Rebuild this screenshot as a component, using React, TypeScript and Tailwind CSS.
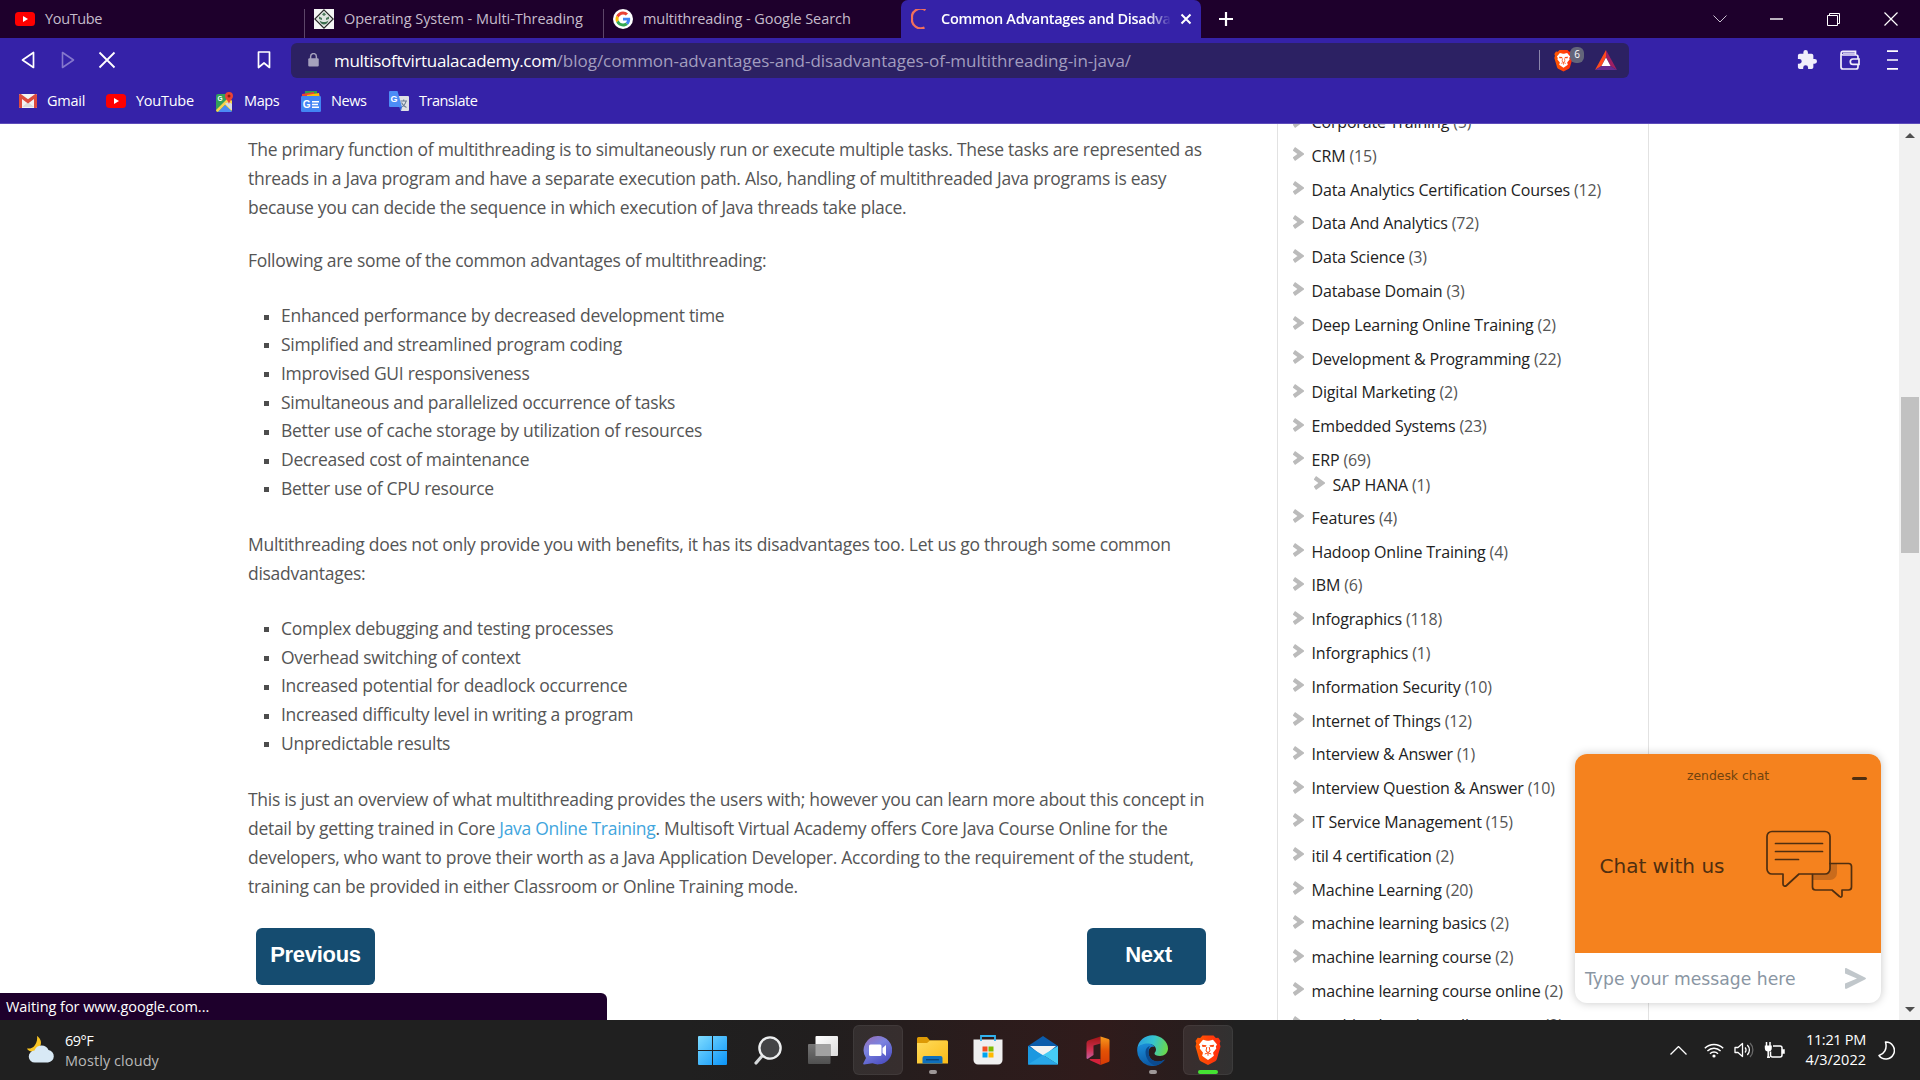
import type { ReactNode } from "react";

const advantages = [
  "Enhanced performance by decreased development time",
  "Simplified and streamlined program coding",
  "Improvised GUI responsiveness",
  "Simultaneous and parallelized occurrence of tasks",
  "Better use of cache storage by utilization of resources",
  "Decreased cost of maintenance",
  "Better use of CPU resource",
];

const disadvantages = [
  "Complex debugging and testing processes",
  "Overhead switching of context",
  "Increased potential for deadlock occurrence",
  "Increased difficulty level in writing a program",
  "Unpredictable results",
];

type Category = { name: string; count: number; child?: { name: string; count: number } };

const categories: Category[] = [
  { name: "Corporate Training", count: 5 },
  { name: "CRM", count: 15 },
  { name: "Data Analytics Certification Courses", count: 12 },
  { name: "Data And Analytics", count: 72 },
  { name: "Data Science", count: 3 },
  { name: "Database Domain", count: 3 },
  { name: "Deep Learning Online Training", count: 2 },
  { name: "Development & Programming", count: 22 },
  { name: "Digital Marketing", count: 2 },
  { name: "Embedded Systems", count: 23 },
  { name: "ERP", count: 69, child: { name: "SAP HANA", count: 1 } },
  { name: "Features", count: 4 },
  { name: "Hadoop Online Training", count: 4 },
  { name: "IBM", count: 6 },
  { name: "Infographics", count: 118 },
  { name: "Inforgraphics", count: 1 },
  { name: "Information Security", count: 10 },
  { name: "Internet of Things", count: 12 },
  { name: "Interview & Answer", count: 1 },
  { name: "Interview Question & Answer", count: 10 },
  { name: "IT Service Management", count: 15 },
  { name: "itil 4 certification", count: 2 },
  { name: "Machine Learning", count: 20 },
  { name: "machine learning basics", count: 2 },
  { name: "machine learning course", count: 2 },
  { name: "machine learning course online", count: 2 },
  { name: "machine learning online course", count: 2 },
];

function YouTubeIcon() {
  return (
    <svg width="20" height="14" viewBox="0 0 20 14">
      <rect width="20" height="14" rx="3.5" fill="#f00" />
      <path d="M8 4l5 3-5 3z" fill="#fff" />
    </svg>
  );
}

function GoogleIcon() {
  return (
    <svg width="20" height="20" viewBox="0 0 48 48">
      <circle cx="24" cy="24" r="24" fill="#fff" />
      <g transform="translate(6 6) scale(.75)">
        <path fill="#EA4335" d="M24 9.5c3.54 0 6.71 1.22 9.21 3.6l6.85-6.85C35.9 2.38 30.47 0 24 0 14.62 0 6.51 5.38 2.56 13.22l7.98 6.19C12.43 13.72 17.74 9.5 24 9.5z" />
        <path fill="#4285F4" d="M46.98 24.55c0-1.57-.15-3.09-.38-4.55H24v9.02h12.94c-.58 2.96-2.26 5.48-4.78 7.18l7.73 6c4.51-4.18 7.09-10.36 7.09-17.65z" />
        <path fill="#FBBC05" d="M10.53 28.59A14.5 14.5 0 0 1 9.77 24c0-1.6.27-3.14.76-4.59l-7.98-6.19A23.9 23.9 0 0 0 0 24c0 3.88.92 7.54 2.56 10.78l7.97-6.19z" />
        <path fill="#34A853" d="M24 48c6.48 0 11.93-2.13 15.89-5.81l-7.73-6c-2.15 1.45-4.92 2.3-8.16 2.3-6.26 0-11.57-4.22-13.47-9.91l-7.98 6.19C6.51 42.62 14.62 48 24 48z" />
      </g>
    </svg>
  );
}

function TutorialIcon() {
  return (
    <svg width="20" height="20" viewBox="0 0 20 20">
      <rect width="20" height="20" fill="#f4f5f4" />
      <path d="M10 .8L19.2 10 10 19.2.8 10z" fill="#dfe5e0" stroke="#222" strokeWidth="1.1" />
      <path d="M10 3.500l2 2-2 1.500-2-1.500zM5 7.500l3 1.500v2l-3-1zM15 7.500L12 9v2l3-1z" fill="#4c7a5b" />
      <path d="M5.500 11.500c1 3 3 4 4.500 4s3.500-1 4.500-4c-1.500 1.300-3 1.500-4.500 1.500s-3-.2-4.500-1.500z" fill="#3d6e4e" />
    </svg>
  );
}

function GmailIcon() {
  return (
    <svg width="18" height="14" viewBox="0 0 18 14">
      <rect width="18" height="14" rx="1.200" fill="#f3f3f3" />
      <path d="M3 13l6-5 6 5" fill="#dcdcdc" />
      <path d="M0 1.500V13a1 1 0 0 0 1 1h2V5l6 4.500L15 5v9h2a1 1 0 0 0 1-1V1.500C18 .2 16.500-.3 15.500.5L9 5.300 2.500.5C1.500-.3 0 .2 0 1.500z" fill="#dd4b3e" />
    </svg>
  );
}

function MapsIcon() {
  return (
    <svg width="19" height="21" viewBox="0 0 19 21">
      <path d="M1 5a2 2 0 0 1 2-2h8l6 7v9a2 2 0 0 1-2 2H3a2 2 0 0 1-2-2z" fill="#34a05a" />
      <path d="M1 19L14 6l3 4v9l-1 1-6-6-7 7c-1 0-2-1-2-2z" fill="#f8d24b" />
      <path d="M3 21l7-7 7 6.500-1 .5z" fill="#4c8bf5" />
      <path d="M10 12.500l7 7V13l-3-2z" fill="#d7dde2" />
      <text x="2.500" y="9.500" fontSize="6.500" fontWeight="700" fill="#fff" fontFamily="Liberation Sans, sans-serif">G</text>
      <path d="M14 1a4 4 0 0 1 4 4c0 3-3 4-4 8-1-4-4-5-4-8a4 4 0 0 1 4-4z" fill="#ea4335" />
      <circle cx="14" cy="5" r="1.500" fill="#8c1c13" />
    </svg>
  );
}

function NewsIcon() {
  return (
    <svg width="20" height="21" viewBox="0 0 20 21">
      <path d="M4 0h12v6H4z" fill="#2e9e4f" />
      <path d="M1 3l12-2 1 6H1z" fill="#ea4335" />
      <path d="M6 4l12-2 1 5H6z" fill="#fbbc05" />
      <rect y="5" width="20" height="16" rx="1.200" fill="#4285f4" />
      <text x="1.800" y="16.800" fontSize="10" fontWeight="700" fill="#fff" fontFamily="Liberation Sans, sans-serif">G</text>
      <path d="M11 10h7v1.500h-7zM11 12.700h6v1.500h-6zM11 15.400h7v1.500h-7z" fill="#fff" />
    </svg>
  );
}

function TranslateIcon() {
  return (
    <svg width="20" height="20" viewBox="0 0 20 20">
      <path d="M8 5h11a1 1 0 0 1 1 1v13a1 1 0 0 1-1 1h-7z" fill="#dfe1e4" />
      <path d="M11.500 10h6.500M14.700 8.500V10M17 10c-.5 3-2.500 5-4.500 6M12.500 11.500c1 2.500 2.500 4 5 5" stroke="#6b7f95" strokeWidth="1.100" fill="none" />
      <path d="M1 0h7.500l4.500 16H1a1 1 0 0 1-1-1V1a1 1 0 0 1 1-1z" fill="#4c8df6" />
      <path d="M10 16h3l-1 4z" fill="#3367d6" />
      <text x="1.600" y="11" fontSize="9" fontWeight="700" fill="#fff" fontFamily="Liberation Sans, sans-serif">G</text>
    </svg>
  );
}

function BraveLion({ width, height }: { width: number; height: number }) {
  return (
    <svg width={width} height={height} viewBox="0 0 26 30">
      <defs>
        <linearGradient id="lion" x1="0" x2="1">
          <stop offset="0" stopColor="#ff5a00" />
          <stop offset="1" stopColor="#ff2a10" />
        </linearGradient>
      </defs>
      <path d="M7.500.5h11l2.300 2.600 2.500-.3L25.500 6l-.8 2.500.8 3-3.600 12.500a4 4 0 0 1-1.600 2.200L13 30l-7.300-3.800A4 4 0 0 1 4.100 24L.5 11.500l.8-3L.5 6l2.200-3.200 2.500.3z" fill="url(#lion)" />
      <path d="M8 4.800l3 .7c1.300.4 2.700.4 4 0l3-.7 4 4.700-1.200 2 .5 2-3.300 4.300.9 3-1.900 1.500L13 25l-4-2.700-1.900-1.500.9-3-3.300-4.300.5-2L4 9.500z" fill="#fff" />
      <path d="M6.800 9.800l4.700.5-.6 1.500-3.400.2zM19.200 9.800l-4.700.5.6 1.500 3.400.2z" fill="#fc4a10" />
      <path d="M11.800 12l-.8 4 2 1.500 2-1.500-.8-4M9.800 19l3.200-1.300 3.200 1.300M13 17.700v3" fill="none" stroke="#fc4a10" />
    </svg>
  );
}

function Tab({ icon, title, className }: { icon: ReactNode; title: string; className: string }) {
  return (
    <div className={`flex h-full items-center gap-2.5 text-[14.5px] text-[#c5bccb] ${className}`}>
      {icon}
      <span className="whitespace-nowrap">{title}</span>
    </div>
  );
}

function TabStrip() {
  return (
    <div className="flex h-[38px] shrink-0 items-stretch bg-[#1e002c]">
      <Tab icon={<YouTubeIcon />} title="YouTube" className="w-[304px] pl-[15px] tracking-[-0.35px]" />
      <div className="mt-[9px] w-px bg-[#5c4568]" />
      <Tab icon={<TutorialIcon />} title="Operating System - Multi-Threading" className="w-[298px] pl-[9px] tracking-[-0.04px]" />
      <div className="mt-[9px] w-px bg-[#5c4568]" />
      <Tab icon={<GoogleIcon />} title="multithreading - Google Search" className="w-[297px] pl-[9px] tracking-[-0.07px]" />
      <div className="flex w-[300px] items-center rounded-t-[7px] bg-[#3522a8] pl-[10px] text-white">
        <svg width="20" height="20" viewBox="0 0 20 20" fill="none">
          <path d="M14.500 1A8.800 8.800 0 0 0 1 9.500 8.800 8.800 0 0 0 13.500 18.500" stroke="#f2705c" strokeWidth="2.300" />
        </svg>
        <div className="ml-[10px] w-[230px] overflow-hidden text-[14.5px] font-semibold tracking-[-0.31px] whitespace-nowrap [mask-image:linear-gradient(to_right,black_90%,transparent)]">
          Common Advantages and Disadvantages
        </div>
        <svg className="ml-[9px]" width="12" height="12" viewBox="0 0 12 12">
          <path d="M1.500 1.500l9 9M10.500 1.500l-9 9" stroke="#fff" strokeWidth="2" />
        </svg>
      </div>
      <div className="flex w-[50px] items-center justify-center">
        <svg width="16" height="16" viewBox="0 0 16 16">
          <path d="M8 1v14M1 8h14" stroke="#fff" strokeWidth="2.200" />
        </svg>
      </div>
      <div className="ml-auto flex items-center text-white">
        <svg className="mr-[43px]" width="14" height="8" viewBox="0 0 14 8" fill="none" stroke="#c9bfd0">
          <path d="M.5.5L7 7 13.500.5" />
        </svg>
        <svg className="mr-[44px]" width="13" height="2" viewBox="0 0 13 2">
          <path d="M0 1h13" stroke="#fff" strokeWidth="1.400" />
        </svg>
        <svg className="mr-[44px]" width="13" height="13" viewBox="0 0 13 13" fill="none" stroke="#fff">
          <path d="M.5 2.500h10v10H.5zM2.500 2.500v-2h10v10h-2" />
        </svg>
        <svg className="mr-[22px]" width="14" height="14" viewBox="0 0 14 14" fill="none" stroke="#fff">
          <path d="M.5.5l13 13M13.500.5l-13 13" strokeWidth="1.200" />
        </svg>
      </div>
    </div>
  );
}

function AddressBar() {
  return (
    <div className="flex h-[44px] shrink-0 items-center bg-[#3522a8]">
      <svg className="ml-[21px]" width="14" height="18" viewBox="0 0 14 18" fill="none">
        <path d="M12.500 1.500v15L1.500 9z" stroke="#fff" strokeWidth="1.700" strokeLinejoin="round" />
      </svg>
      <svg className="ml-[26px]" width="14" height="18" viewBox="0 0 14 18" fill="none">
        <path d="M1.500 1.500v15L12.500 9z" stroke="#8577cc" strokeWidth="1.600" strokeLinejoin="round" />
      </svg>
      <svg className="ml-[23px]" width="18" height="18" viewBox="0 0 18 18">
        <path d="M1.500 1.500l15 15M16.500 1.500l-15 15" stroke="#fff" strokeWidth="1.800" />
      </svg>
      <svg className="ml-[141px]" width="14" height="18" viewBox="0 0 14 18" fill="none">
        <path d="M1.500 1h11v15.500L7 12l-5.500 4.500z" stroke="#fff" strokeWidth="1.700" strokeLinejoin="round" />
      </svg>
      <div className="ml-5 flex h-[35px] w-[1338px] items-center rounded-md bg-[#2c2163]">
        <svg className="ml-[17px]" width="11" height="14" viewBox="0 0 12 16">
          <path d="M2.700 7V4a3.300 3.300 0 0 1 6.600 0v3" stroke="#a5a1bd" strokeWidth="1.700" fill="none" />
          <rect y="6" width="12" height="9.500" rx="1.300" fill="#a5a1bd" />
        </svg>
        <div className="mt-[2px] ml-[15px] text-[17px] whitespace-nowrap">
          <span className="tracking-[-0.3px] text-white">multisoftvirtualacademy.com</span>
          <span className="tracking-[-0.02px] text-[#a29dbf]">/blog/common-advantages-and-disadvantages-of-multithreading-in-java/</span>
        </div>
        <div className="ml-auto h-5 w-px bg-[#8b86ab]" />
        <div className="relative ml-[14px]">
          <BraveLion width={19} height={23} />
          <span className="absolute -top-[2px] left-[16px] flex h-[16px] w-[14px] items-center justify-center rounded-md bg-[#63657a] text-[10px] text-white">6</span>
        </div>
        <svg className="mr-[12px] ml-[22px]" width="22" height="20" viewBox="0 0 22 20">
          <path d="M11 0L0 20l6.500-4L11 7z" fill="#ff4a1c" />
          <path d="M11 0l11 20-6.500-4L11 7z" fill="#9e1f63" />
          <path d="M0 20h22l-6.500-4h-9z" fill="#662d91" />
          <path d="M11 7.500l4.500 8.500h-9z" fill="#fff" />
        </svg>
      </div>
      <div className="ml-auto flex items-center">
        <svg className="mr-[23px]" width="20" height="22" viewBox="1 1 22 22" fill="#f1eefb">
          <path d="M20.500 11H19V7a2 2 0 0 0-2-2h-4V3.500a2.500 2.500 0 0 0-5 0V5H4a2 2 0 0 0-2 2v3.800h1.500a2.700 2.700 0 0 1 0 5.400H2V20a2 2 0 0 0 2 2h3.800v-1.500a2.700 2.700 0 0 1 5.400 0V22H17a2 2 0 0 0 2-2v-4h1.500a2.500 2.500 0 0 0 0-5z" />
        </svg>
        <svg className="mr-[27px]" width="20" height="22" viewBox="0 0 20 22" fill="none" stroke="#f1eefb" strokeWidth="1.700">
          <path d="M1 4.500V18a2 2 0 0 0 2 2h13a2 2 0 0 0 2-2V8a2 2 0 0 0-2-2H3a1.800 1.800 0 0 1 0-3.600h12.500V6" />
          <path d="M19 10h-6a2.700 2.700 0 0 0 0 5.400h6z" fill="#3522a8" />
          <path d="M3 4.200h12" strokeWidth="1.200" />
        </svg>
        <svg className="mr-[22px]" width="11" height="20" viewBox="0 0 11 20">
          <path d="M0 1.200h11M0 10h11M0 18.800h11" stroke="#fff" strokeWidth="1.700" />
        </svg>
      </div>
    </div>
  );
}

function Bookmarks() {
  return (
    <div className="flex h-[42px] shrink-0 items-center border-b border-[#5d4cba] bg-[#3522a8] pb-[3px] text-[14.5px] whitespace-nowrap text-white">
      <div className="ml-[19px] flex w-[87px] items-center gap-[10px] tracking-[-0.25px]"><GmailIcon />Gmail</div>
      <div className="flex w-[109px] items-center gap-[10px] tracking-[-0.25px]"><YouTubeIcon />YouTube</div>
      <div className="flex w-[86px] items-center gap-[10px] tracking-[-0.4px]"><MapsIcon />Maps</div>
      <div className="flex w-[88px] items-center gap-[10px] tracking-[-0.4px]"><NewsIcon />News</div>
      <div className="flex items-center gap-[10px] tracking-[-0.5px]"><TranslateIcon />Translate</div>
    </div>
  );
}

function BulletList({ items, className }: { items: string[]; className: string }) {
  return (
    <ul className={className}>
      {items.map((item) => (
        <li key={item} className="flex items-center">
          <span className="mt-[3px] mr-3 ml-4 size-[5px] bg-[#4d4d4d]" />
          {item}
        </li>
      ))}
    </ul>
  );
}

function Article() {
  return (
    <article className="ml-[248px] w-[989px] shrink-0 pt-[11px] text-[17.5px] leading-[28.8px] tracking-[-0.288px] whitespace-nowrap text-[#555]">
      <p>
        The primary function of multithreading is to simultaneously run or execute multiple tasks. These tasks are represented as<br />
        threads in a Java program and have a separate execution path. Also, handling of multithreaded Java programs is easy<br />
        because you can decide the sequence in which execution of Java threads take place.
      </p>
      <p className="mt-[24.5px]">Following are some of the common advantages of multithreading:</p>
      <BulletList items={advantages} className="mt-[26.5px]" />
      <p className="mt-[27px]">
        Multithreading does not only provide you with benefits, it has its disadvantages too. Let us go through some common<br />
        disadvantages:
      </p>
      <BulletList items={disadvantages} className="mt-[26.5px]" />
      <p className="mt-[27.3px]">
        This is just an overview of what multithreading provides the users with; however you can learn more about this concept in<br />
        detail by getting trained in Core <a className="text-[#41a5dd]">Java Online Training</a>. Multisoft Virtual Academy offers Core Java Course Online for the<br />
        developers, who want to prove their worth as a Java Application Developer. According to the requirement of the student,<br />
        training can be provided in either Classroom or Online Training mode.
      </p>
      <div className="mt-[28px] flex gap-[712px] pl-[8px] font-['Liberation_Sans',sans-serif] text-[22px] font-bold text-white">
        <button className="h-[57px] w-[119px] rounded-md bg-[#154c70] pb-[2px]">Previous</button>
        <button className="h-[57px] w-[119px] rounded-md bg-[#154c70] pb-[2px] pl-1">Next</button>
      </div>
    </article>
  );
}

function CategoryLabel({ name, count }: { name: string; count: number }) {
  return (
    <div className="flex h-[25px] items-center">
      <svg className="mr-2 mb-[3px]" width="11" height="14" viewBox="0 0 11 14" fill="none">
        <path d="M.8 1.800L8 7 .8 12.200" stroke="#bbb" strokeWidth="4.200" />
      </svg>
      <span className="text-[#222]">{name}</span>
      <span className="ml-1 text-[#555]">({count})</span>
    </div>
  );
}

function Sidebar() {
  return (
    <aside className="ml-[40px] w-[372px] shrink-0 border-x border-[#e2e2e2] text-[16px] tracking-[-0.16px] whitespace-nowrap">
      <ul className="-mt-[14.5px] ml-[14.5px]">
        {categories.map((category) => (
          <li key={category.name} className="mb-[8.8px]">
            <CategoryLabel name={category.name} count={category.count} />
            {category.child && (
              <div className="-mb-[1px] pl-[21px]">
                <CategoryLabel name={category.child.name} count={category.child.count} />
              </div>
            )}
          </li>
        ))}
      </ul>
    </aside>
  );
}

function ChatWidget() {
  return (
    <div className="absolute top-[630px] left-[1575px] flex h-[249px] w-[306px] flex-col overflow-hidden rounded-xl bg-white font-['DejaVu_Sans',sans-serif] shadow-[0_0_10px_rgba(0,0,0,0.22)]">
      <div className="flex h-[199px] flex-col bg-[#f5821e] text-[#4f2e10]">
        <div className="relative flex h-[43px] items-center justify-center pt-[2px] text-[12.4px] text-[#70420f]">
          zendesk chat
          <span className="absolute top-[23px] right-[14px] h-[2.500px] w-[15px] rounded-full bg-[#4f2e10]" />
        </div>
        <div className="flex items-start justify-between pr-[28px] pl-[24.5px]">
          <span className="mt-[54px] text-[20px]">Chat with us</span>
          <svg className="mt-[33px]" width="88" height="70" viewBox="0 0 88 70" fill="none" stroke="#4f2e10" strokeWidth="1.700" strokeLinejoin="round" strokeLinecap="round">
            <path d="M65 33h7v10a7 7 0 0 1-7 7H48v-6h12a5 5 0 0 0 5-5z" fill="#c96b1c" stroke="none" />
            <path d="M7 1.500h53a5 5 0 0 1 5 5V39a5 5 0 0 1-5 5H34L21.500 55.500c-1.500 1.300-3.500.5-3.500-1.500V44H7a5 5 0 0 1-5-5V6.500a5 5 0 0 1 5-5z" />
            <path d="M65 33.500h18.500a3 3 0 0 1 3 3V57a3 3 0 0 1-3 3H77v5.500c0 1.500-1.500 2-2.500 1L67 60H50.500a3 3 0 0 1-3-3V44.500" />
            <path d="M10.500 13.500h47M10.500 21.500h47M10.500 29.500h23" />
          </svg>
        </div>
      </div>
      <div className="flex flex-1 items-center justify-between pr-[15px] pl-[10px] text-[17.2px] text-[#8a96a3]">
        <span className="mt-[3px]">Type your message here</span>
        <svg width="21" height="21" viewBox="0 0 21 21">
          <path d="M0 1.200C0 .2.700-.2 1.600.2L20 9.500c1.300.7 1.300 1.300 0 2L1.600 20.800c-.9.4-1.600 0-1.600-1v-4.300l12-5-12-5z" fill="#c1c7cb" />
        </svg>
      </div>
    </div>
  );
}

function Scrollbar() {
  return (
    <div className="ml-auto flex w-[21px] flex-col items-center bg-[#f1f1f1]">
      <svg className="mt-[9px]" width="10" height="5" viewBox="0 0 10 5"><path d="M5 0l5 5H0z" fill="#505050" /></svg>
      <div className="mt-[259px] h-[156px] w-[18px] bg-[#c1c1c1]" />
      <svg className="mt-auto mb-[8px]" width="10" height="5" viewBox="0 0 10 5"><path d="M0 0h10L5 5z" fill="#505050" /></svg>
    </div>
  );
}

function TaskbarButton({ children, active, indicator }: { children: ReactNode; active?: boolean; indicator?: "idle" | "focused" }) {
  return (
    <div className="flex w-[55px] justify-center">
      <div className={`relative flex h-[50px] w-[50px] items-center justify-center rounded-md ${active ? "border border-white/5 bg-white/8" : ""}`}>
        {children}
        {indicator === "idle" && <span className="absolute bottom-px h-1 w-2 rounded-full bg-[#9e9898]" />}
        {indicator === "focused" && <span className="absolute bottom-0 h-1 w-5 rounded-full bg-[#45e233]" />}
      </div>
    </div>
  );
}

function TaskbarApps() {
  return (
    <div className="flex items-center">
      <TaskbarButton>
        <svg width="29" height="29" viewBox="0 0 29 29">
          <defs>
            <linearGradient id="win" x1="0" y1="0" x2="1" y2="1" gradientUnits="objectBoundingBox">
              <stop offset="0" stopColor="#7fdcff" />
              <stop offset="1" stopColor="#0a94f8" />
            </linearGradient>
          </defs>
          <path d="M1 0h13v14H0V1a1 1 0 0 1 1-1zM15 0h13a1 1 0 0 1 1 1v13H15zM0 15h14v14H1a1 1 0 0 1-1-1zM15 15h14v13a1 1 0 0 1-1 1H15z" fill="url(#win)" />
        </svg>
      </TaskbarButton>
      <TaskbarButton>
        <svg width="28" height="29" viewBox="0 0 28 29">
          <path d="M8.500 19.500L2 27" stroke="#d5d8da" strokeWidth="3.200" strokeLinecap="round" />
          <circle cx="16" cy="12" r="10.600" fill="#434446" stroke="#eceeef" strokeWidth="2.400" />
        </svg>
      </TaskbarButton>
      <TaskbarButton>
        <svg width="30" height="28" viewBox="0 0 30 28">
          <defs>
            <linearGradient id="tv1" x1="0" y1="0" x2="1" y2="1"><stop stopColor="#fff" /><stop offset="1" stopColor="#dcdcdc" /></linearGradient>
            <linearGradient id="tv2" x1="0" y1="0" x2="0" y2="1"><stop stopColor="#767676" /><stop offset="1" stopColor="#505050" /></linearGradient>
          </defs>
          <rect x="7.500" width="22.500" height="20" rx="1" fill="url(#tv1)" />
          <rect y="8" width="22.500" height="20" rx="1" fill="url(#tv2)" />
          <rect x="7.500" y="8" width="15" height="12" fill="#a2a2a2" />
        </svg>
      </TaskbarButton>
      <TaskbarButton active>
        <svg width="29" height="29" viewBox="0 0 29 29">
          <defs>
            <linearGradient id="teams" x1="0" y1="0" x2=".6" y2="1">
              <stop stopColor="#9a6bb0" /><stop offset=".45" stopColor="#7b83e0" /><stop offset="1" stopColor="#4f52c4" />
            </linearGradient>
          </defs>
          <path d="M14.500 0a14.200 14.200 0 1 1-5 27.300L1 28.500c-.8 0-1-.6-.7-1.200L3 22A14.200 14.200 0 0 1 14.500 0z" fill="url(#teams)" />
          <rect x="6" y="8.500" width="12.500" height="11.500" rx="1.500" fill="#fff" />
          <path d="M19.500 12l3.500-3v11l-3.500-3z" fill="#fff" />
        </svg>
      </TaskbarButton>
      <TaskbarButton indicator="idle">
        <svg width="31" height="27" viewBox="0 0 31 27">
          <defs>
            <linearGradient id="folder" x1="0" y1="0" x2="1" y2="1"><stop stopColor="#ffdb5c" /><stop offset="1" stopColor="#fbbc17" /></linearGradient>
          </defs>
          <path d="M1.500 0H10l3 3.500h17.500V10H0V1.500A1.500 1.500 0 0 1 1.500 0z" fill="#dd9a05" />
          <path d="M0 6h10l3-2.500h16.500A1.500 1.500 0 0 1 31 5v21.500H0z" fill="url(#folder)" />
          <path d="M5.500 26.500V21a2 2 0 0 1 2-2h16a2 2 0 0 1 2 2v5.500z" fill="#0f70bd" />
          <path d="M9 22.700h13" stroke="#0a4479" strokeWidth="1.400" />
        </svg>
      </TaskbarButton>
      <TaskbarButton>
        <svg width="30" height="30" viewBox="0 0 30 30">
          <path d="M.5 4.500h29V25a4.500 4.500 0 0 1-4.500 4.500H5A4.500 4.500 0 0 1 .5 25z" fill="#f0f0f0" />
          <path d="M8 6V1h14v5" stroke="#31b2ee" strokeWidth="1.800" fill="none" />
          <path d="M9.500 11.500h5v5h-5z" fill="#f25022" /><path d="M15.500 11.500h5v5h-5z" fill="#7fba00" />
          <path d="M9.500 17.500h5v5h-5z" fill="#00a4ef" /><path d="M15.500 17.500h5v5h-5z" fill="#ffb900" />
        </svg>
      </TaskbarButton>
      <TaskbarButton>
        <svg width="30" height="29" viewBox="0 0 30 29">
          <path d="M15 0l15 10v6H0v-6z" fill="#0b5cab" />
          <path d="M2 10h26L15 21z" fill="#f2f2f2" />
          <path d="M0 10l30 18.500H0z" fill="#1b98e0" />
          <path d="M30 10v18.500L15 19z" fill="#46ccf5" />
          <path d="M0 28.500h30L15 19z" fill="#29a7e8" />
        </svg>
      </TaskbarButton>
      <TaskbarButton>
        <svg width="24" height="29" viewBox="0 0 24 29">
          <defs>
            <linearGradient id="of1" x1="0" y1="0" x2="0" y2="1"><stop stopColor="#a01414" /><stop offset=".6" stopColor="#cf3152" /><stop offset="1" stopColor="#c25fa0" /></linearGradient>
            <linearGradient id="of2" x1="0" y1="0" x2="0" y2="1"><stop stopColor="#f79a1c" /><stop offset=".5" stopColor="#e35205" /><stop offset="1" stopColor="#d63a05" /></linearGradient>
          </defs>
          <path d="M.5 7a3 3 0 0 1 1.700-2.400L14.500.5V7.500L7.500 9.500v9.500L2.300 22.500C1 23.300.5 22.800.5 21.500z" fill="url(#of1)" />
          <path d="M4 23h10.500v6L4.500 24.500C3.500 24 3.200 23 4 23z" fill="#d4213b" />
          <path d="M14.500.5l8 2.500a1.500 1.500 0 0 1 1 1.400v20.200a1.500 1.500 0 0 1-1 1.400l-8 3z" fill="url(#of2)" />
        </svg>
      </TaskbarButton>
      <TaskbarButton indicator="idle">
        <svg width="31" height="31" viewBox="0 0 31 31">
          <defs>
            <linearGradient id="ed1" x1="0" y1=".3" x2="1" y2=".5"><stop stopColor="#2a9fe0" /><stop offset=".5" stopColor="#35c4cf" /><stop offset="1" stopColor="#6ad84a" /></linearGradient>
            <linearGradient id="ed2" x1="0" y1="0" x2=".3" y2="1"><stop stopColor="#1b90dc" /><stop offset="1" stopColor="#0c59a4" /></linearGradient>
          </defs>
          <path d="M.3 13A15.300 15.300 0 0 1 15.500.2C24.500.2 31 7 31 13.500c0 4.500-3.500 7.500-8 7.500-3.500 0-5.500-1.300-5.500-2.500 0-.9 1.500-1.500 1.500-4 0-3-3-5.500-7-5.500C7 9 2.500 11 .3 13z" fill="url(#ed1)" />
          <path d="M.3 13C2 10 6.500 8.500 10.500 8.500c4 0 6.500 2 7 3.500-3-1-6 1-6 5.500 0 5 4 9 9 9 3 0 5.500-1 7.500-2A15.300 15.300 0 0 1 .2 15z" fill="url(#ed2)" />
          <path d="M8.500 17c0-3 2-5.500 4.500-6-1.500 2-1.500 4-1.500 6.500 0 5 4 9 9 9 3 0 5.500-1 7.500-2-2.500 3.500-6 5.700-10 6C12.500 29 8.500 23 8.500 17z" fill="#0b4a8f" />
        </svg>
      </TaskbarButton>
      <TaskbarButton active indicator="focused">
        <BraveLion width={26} height={30} />
      </TaskbarButton>
    </div>
  );
}

function Taskbar() {
  return (
    <footer className="flex h-[60px] shrink-0 items-center bg-[#202020] text-[14.5px] text-white">
      <div className="flex w-[685px] items-center pl-[26px]">
        <svg className="mb-px" width="29" height="27" viewBox="0 0 29 27">
          <path d="M11 0c3 2 5 5.500 3.500 9.500C13 14 9 16 5 15.500 3 15 1.500 13.800 1 12.500c3 .5 6-.5 8-3.500s2.500-6 2-9z" fill="#f9c524" />
          <path d="M9 26.500a6 6 0 0 1-.5-12 7.500 7.500 0 0 1 14-.5 6.300 6.300 0 0 1-.5 12.500z" fill="#d8e9f5" />
        </svg>
        <div className="mt-px ml-[10px] leading-[20px]">
          <div className="tracking-[-0.5px]">69°F</div>
          <div className="tracking-[0.08px] text-[#b9b9b9]">Mostly cloudy</div>
        </div>
      </div>
      <div className="flex h-full items-center bg-[linear-gradient(90deg,#202020,#211e1e_25%,#2b1c1c_55%,#301b1b_75%,#281d1d_92%,#202020)]">
        <TaskbarApps />
      </div>
      <div className="ml-auto flex items-center">
        <svg className="mr-[17px]" width="17" height="9" viewBox="0 0 17 9" fill="none" stroke="#fff" strokeWidth="1.300">
          <path d="M.5 8.500l8-8 8 8" />
        </svg>
        <svg className="mr-[10px]" width="20" height="15" viewBox="0 0 20 15" fill="none" stroke="#fff" strokeWidth="1.400">
          <path d="M.8 5.300a13 13 0 0 1 18.400 0M3.400 8a9.300 9.300 0 0 1 13.200 0M6 10.700a5.600 5.600 0 0 1 8 0" />
          <circle cx="10" cy="13" r="1.600" fill="#fff" stroke="none" />
        </svg>
        <svg className="mr-[9px]" width="21" height="16" viewBox="0 0 21 16" fill="none" stroke="#fff" strokeWidth="1.300">
          <path d="M1 5.500h3L8.500 1.500v13L4 10.500H1z" strokeLinejoin="round" />
          <path d="M11 5.500a3.500 3.500 0 0 1 0 5M13.300 3a7 7 0 0 1 0 10" />
          <path d="M16 1a10 10 0 0 1 0 14" stroke="#686868" />
        </svg>
        <svg className="mr-[21px]" width="21" height="17" viewBox="0 0 21 17" fill="none" stroke="#fff" strokeWidth="1.500">
          <path d="M9 4h7a2 2 0 0 1 2 2v7a2 2 0 0 1-2 2H8.500a2 2 0 0 1-2-2V9.500" />
          <path d="M18.500 8h1.500v3h-1.500z" fill="#fff" />
          <path d="M2.500 0v4M6 0v4M4.200 8v7" />
          <path d="M.8 3.500h7v2.500a3.500 3.500 0 0 1-7 0z" fill="#fff" stroke="none" />
          <path d="M3 15.200h3" />
        </svg>
        <div className="text-right leading-[20px]">
          <div className="tracking-[-0.3px]">11:21 PM</div>
          <div>4/3/2022</div>
        </div>
        <svg className="mr-[25px] ml-[12px]" width="17" height="19" viewBox="0 0 17 19" fill="none" stroke="#fff" strokeWidth="1.500">
          <path d="M7.500 1A8.500 8.500 0 1 1 1 14.500C6 13 9.500 8 7.500 1z" strokeLinejoin="round" />
        </svg>
      </div>
    </footer>
  );
}

export default function App() {
  return (
    <div className="flex h-[1080px] w-[1920px] flex-col overflow-hidden bg-white font-['Open_Sans',sans-serif]">
      <TabStrip />
      <AddressBar />
      <Bookmarks />
      <main className="relative flex h-[896px] shrink-0 overflow-hidden bg-white">
        <Article />
        <Sidebar />
        <Scrollbar />
        <ChatWidget />
        <div className="absolute bottom-0 left-0 h-[27px] w-[607px] rounded-tr-md bg-[#1e002c] pl-[6px] text-[14.5px] leading-[27px] tracking-[-0.05px] text-white">
          Waiting for www.google.com...
        </div>
      </main>
      <Taskbar />
    </div>
  );
}
